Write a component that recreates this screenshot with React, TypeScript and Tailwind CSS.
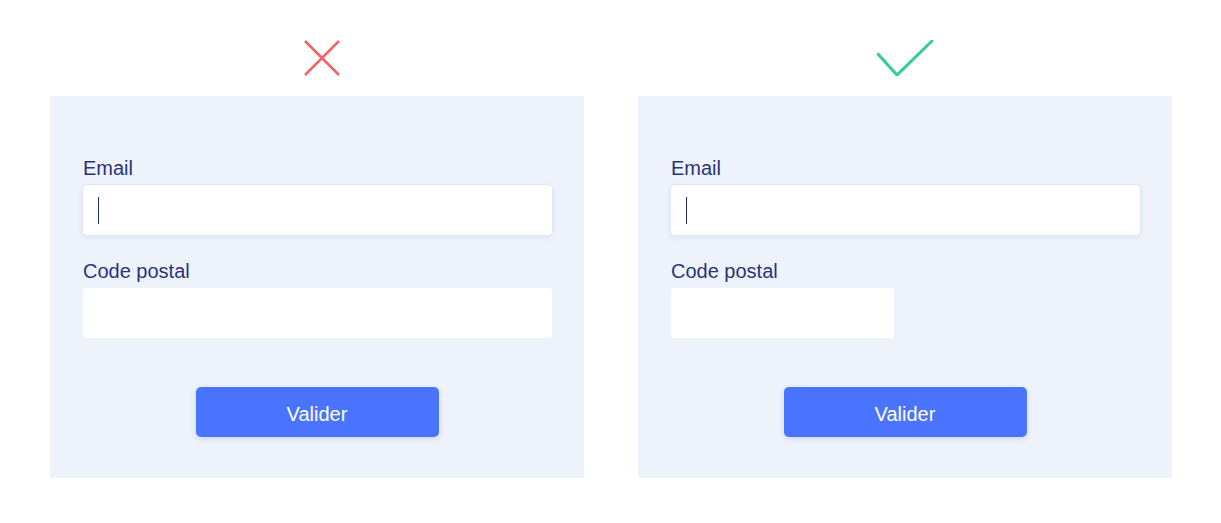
import { useState } from "react";

function Field({ label, width, focused }: { label: string; width: string; focused?: boolean }) {
  return (
    <div className="flex flex-col">
      <label className="text-[20px] leading-[24px] text-[#2a327a]">{label}</label>
      <div
        className={`mt-[5px] h-[50px] ${width} rounded-[4px] bg-white flex items-center pl-[15px] ${
          focused ? "shadow-[0_0_0_1px_#dfe5f4,0_2px_6px_rgba(60,80,160,0.12)]" : ""
        }`}
      >
        {focused && <div className="w-px h-[27px] bg-[#1e2a6e]" />}
      </div>
    </div>
  );
}

function FormPanel({ narrowPostal }: { narrowPostal?: boolean }) {
  const [email] = useState("");
  return (
    <div className="w-[534px] h-[382px] bg-[#eef3fb] pt-[60px] px-[33px] flex flex-col">
      <Field label="Email" width="w-[469px]" focused={email === ""} />
      <div className="mt-[24px]">
        <Field label="Code postal" width={narrowPostal ? "w-[223px]" : "w-[469px]"} />
      </div>
      <div className="mt-[49px] flex justify-center">
        <button className="w-[243px] h-[50px] rounded-[5px] bg-[#4b74fe] text-white text-[20px] pt-[3px] shadow-[0_2px_6px_rgba(60,90,200,0.18)]">
          Valider
        </button>
      </div>
    </div>
  );
}

export default function App() {
  return (
    <div
      className="w-[1221px] h-[523px] bg-white flex gap-[54px] pl-[50px]"
      style={{ fontFamily: '"Liberation Sans", Arial, sans-serif' }}
    >
      <div className="flex flex-col">
        <div className="h-[96px] flex justify-center pt-[40px] pl-[10px]">
          <svg width="36" height="36" viewBox="0 0 36 36">
            <path d="M1 1 L35 35 M35 1 L1 35" stroke="#f26464" strokeWidth="2.5" fill="none" />
          </svg>
        </div>
        <FormPanel />
      </div>
      <div className="flex flex-col">
        <div className="h-[96px] flex justify-center pt-[40px]">
          <svg width="56" height="36" viewBox="0 0 56 36">
            <path d="M1 14 L20 35 L55 1" stroke="#2fd08b" strokeWidth="3" fill="none" strokeLinecap="round" />
          </svg>
        </div>
        <FormPanel narrowPostal />
      </div>
    </div>
  );
}
